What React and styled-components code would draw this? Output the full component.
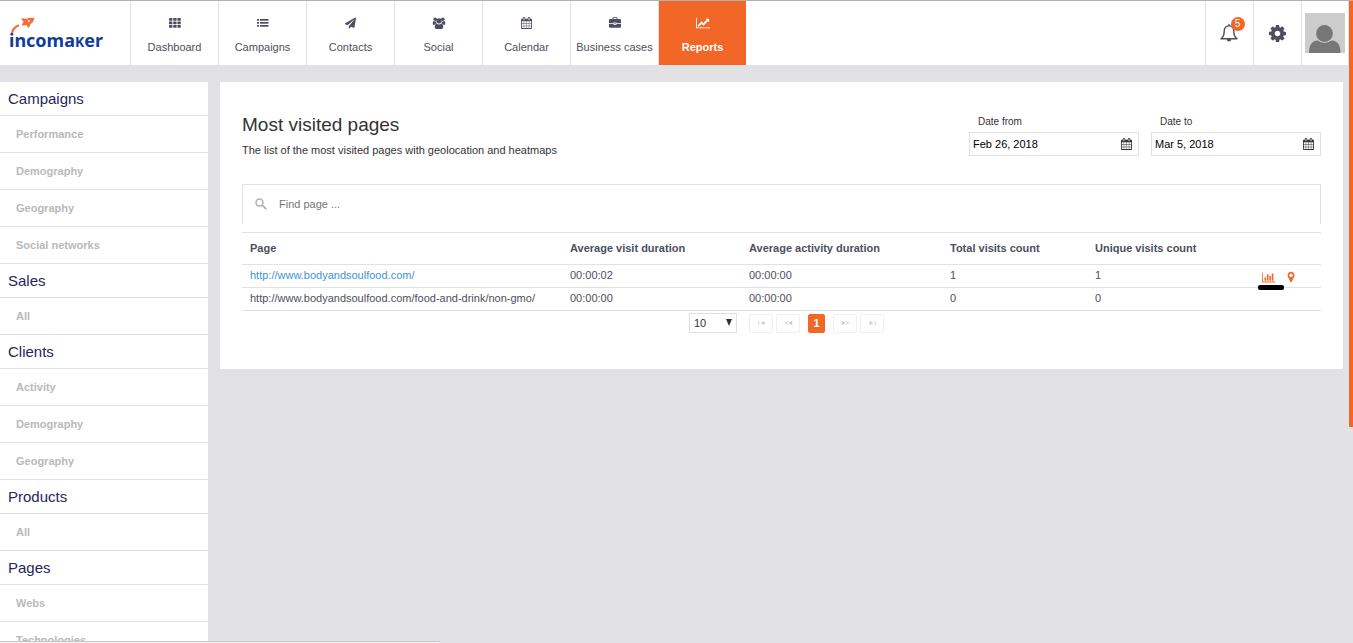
import { useState } from "react";
import styled, { createGlobalStyle } from "styled-components";
import { FaPaperPlane } from "react-icons/fa";

const Colors = {
  Orange: "#f26727",
  White: "#ffffff",
  Background: "#e2e2e4",
  Border: "#e1e1e3",
  Text: "#4d4f60",
  Dark: "#333333",
  Navy: "#26265c",
  Muted: "#b9b9b9",
  Link: "#3b93d8",
  Logo: "#123c9c",
};

const GlobalStyle = createGlobalStyle`
  * {
    box-sizing: border-box;
  }
  body {
    margin: 0;
    background: ${Colors.Background};
    color: ${Colors.Text};
    font-family: "Liberation Sans", Arial, sans-serif;
    font-size: 11px;
    line-height: 14px;
  }
  button, input, select {
    font: inherit;
    color: inherit;
  }
`;

const Shell = styled.div`
  display: grid;
  grid-template-columns: minmax(0, 1fr) 4px;
  height: 100vh;
  overflow: hidden;
  border-top: 1px solid #b0b0b2;
`;

const ScrollThumb = styled.div`
  height: 426px;
  background: ${Colors.Orange};
`;

const Header = styled.header`
  display: flex;
  height: 64px;
  background: ${Colors.White};
`;

const LogoLink = styled.a`
  width: 130px;
  padding: 14px 0 0 8px;
`;

const Nav = styled.nav`
  display: flex;
  flex: 1;
`;

const NavItem = styled.a`
  display: flex;
  flex-direction: column;
  align-items: center;
  gap: 10px;
  width: 88px;
  padding-top: 15px;
  border-left: 1px solid ${Colors.Border};
  background: ${(p) => (p.$active ? Colors.Orange : Colors.White)};
  color: ${(p) => (p.$active ? Colors.White : Colors.Text)};
  font-weight: ${(p) => (p.$active ? 700 : 400)};
  text-decoration: none;
  white-space: nowrap;

  svg {
    height: 14px;
  }
`;

const Tool = styled.button`
  display: flex;
  align-items: center;
  justify-content: center;
  width: 48px;
  padding: 0;
  border: 0;
  border-left: 1px solid ${Colors.Border};
  background: none;

  &:last-child {
    border-right: 1px solid ${Colors.Border};
  }
`;

const BellWrap = styled.span`
  position: relative;
  display: flex;
`;

const Badge = styled.span`
  position: absolute;
  top: -6px;
  right: -5px;
  width: 14px;
  height: 14px;
  border-radius: 50%;
  background: ${Colors.Orange};
  color: ${Colors.White};
  font-size: 10px;
  text-align: center;
`;

const Body = styled.div`
  display: flex;
  align-items: flex-start;
  gap: 12px;
  padding: 17px 6px 0 0;
`;

const Sidebar = styled.aside`
  width: 208px;
  flex-shrink: 0;
  background: ${Colors.White};
`;

const SideHeading = styled.h2`
  margin: 0;
  height: 34px;
  padding-left: 8px;
  border-bottom: 1px solid ${Colors.Border};
  color: ${Colors.Navy};
  font-size: 15px;
  font-weight: 400;
  line-height: 34px;
`;

const SideLink = styled.a`
  display: block;
  height: 37px;
  padding-left: 16px;
  border-bottom: 1px solid ${Colors.Border};
  color: ${Colors.Muted};
  font-weight: 700;
  line-height: 36px;
  text-decoration: none;
`;

const Panel = styled.main`
  flex: 1;
  min-width: 0;
  padding: 31px 22px 36px;
  background: ${Colors.White};
`;

const PanelHead = styled.div`
  display: flex;
  justify-content: space-between;
  margin-bottom: 27px;
`;

const Title = styled.h1`
  margin: 0 0 6px;
  color: ${Colors.Dark};
  font-size: 19px;
  font-weight: 400;
  line-height: 24px;
`;

const Subtitle = styled.p`
  margin: 0;
  color: ${Colors.Dark};
`;

const Dates = styled.div`
  display: flex;
  gap: 12px;
`;

const DateField = styled.label`
  display: flex;
  flex-direction: column;
  width: 170px;
  padding-top: 2px;
  gap: 3px;
  color: ${Colors.Dark};
`;

const DateLabel = styled.span`
  padding-left: 9px;
  font-size: 10px;
`;

const DateBox = styled.span`
  display: flex;
  align-items: center;
  height: 24px;
  padding: 0 6px 0 3px;
  border: 1px solid ${Colors.Border};
`;

const DateInput = styled.input`
  flex: 1;
  min-width: 0;
  padding: 0;
  border: 0;
  outline: 0;
  background: none;
  color: #000;
`;

const Search = styled.label`
  display: flex;
  align-items: center;
  gap: 12px;
  height: 40px;
  margin-bottom: 8px;
  padding: 0 0 2px 12px;
  border: 1px solid ${Colors.Border};
  border-bottom: 0;
`;

const SearchInput = styled.input`
  flex: 1;
  padding: 0;
  border: 0;
  outline: 0;
  background: none;

  &::placeholder {
    color: #757575;
    opacity: 1;
  }
`;

const Table = styled.table`
  width: 100%;
  table-layout: fixed;
  border-collapse: collapse;
  border-top: 1px solid ${Colors.Border};

  th, td {
    padding: 0 8px 2px;
    border-bottom: 1px solid ${Colors.Border};
    text-align: left;
    white-space: nowrap;
  }
  th {
    height: 32px;
  }
  td {
    height: 23px;
  }
`;

const Col = styled.col`
  width: ${(p) => p.$width};
`;

const PageLink = styled.a`
  color: ${Colors.Link};
  text-decoration: none;
`;

const Actions = styled.div`
  display: flex;
  align-items: center;
  gap: 10px;
  padding: 4px 0 0 6px;
`;

const ActionButton = styled.button`
  position: relative;
  display: flex;
  padding: 0;
  border: 0;
  background: none;
  color: ${Colors.Orange};
`;

const Marker = styled.span`
  position: absolute;
  top: 14px;
  left: -4px;
  width: 26px;
  height: 5px;
  border-radius: 2px;
  background: #000;
`;

const Pager = styled.div`
  display: flex;
  align-items: center;
  justify-content: center;
  gap: 3px;
  margin-top: 2px;
  padding-left: 10px;
`;

const SizeSelect = styled.select`
  width: 48px;
  height: 20px;
  margin-right: 9px;
  padding: 0 4px;
  border: 1px solid ${Colors.Border};
  border-radius: 0;
  appearance: none;
  background: ${Colors.White};
  color: ${Colors.Dark};
`;

const SizeWrap = styled.span`
  position: relative;
  display: flex;

  svg {
    position: absolute;
    top: 6px;
    right: 14px;
    pointer-events: none;
  }
`;

const PageButton = styled.button`
  display: flex;
  align-items: center;
  justify-content: center;
  width: 24px;
  height: 19px;
  padding: 0;
  border: 1px solid #f0f0f1;
  border-radius: 2px;
  background: ${Colors.White};
  color: #c3cfd6;
`;

const CurrentPage = styled(PageButton)`
  width: 17px;
  margin: 0 5px;
  border-color: ${Colors.Orange};
  background: ${Colors.Orange};
  color: ${Colors.White};
  font-weight: 700;
`;

const StatusStrip = styled.div`
  position: fixed;
  bottom: 0;
  left: 0;
  width: 440px;
  height: 2px;
  border-top: 1px solid #c6c6c8;
  border-top-right-radius: 2px;
  background: #f2f2f2;
`;

const Glyph = ({ box, size, children }) => (
  <svg width={size} height={size} viewBox={box} fill="currentColor" aria-hidden="true">
    {children}
  </svg>
);

const GridIcon = () => (
  <Glyph box="0 0 14 14" size={14}>
    {[2, 5.5, 9].map((y) =>
      [1, 5.2, 9.4].map((x) => <rect key={`${x}-${y}`} x={x} y={y} width="3.4" height="2.7" rx=".4" />)
    )}
  </Glyph>
);

const ListIcon = () => (
  <Glyph box="0 0 14 14" size={14}>
    {[3, 6, 9].map((y) => (
      <g key={y}>
        <rect x="1" y={y} width="2" height="1.7" />
        <rect x="4" y={y} width="8.500" height="1.7" />
      </g>
    ))}
  </Glyph>
);

const UsersIcon = () => (
  <Glyph box="0 0 14 14" size={14}>
    <circle cx="3.2" cy="3.2" r="1.8" />
    <circle cx="10.8" cy="3.2" r="1.8" />
    <circle cx="7" cy="4.8" r="2.6" />
    <path d="M.8 8.2V6.6Q.8 5 2 5q1 .8 2.2.4Q4 6.8 4.900 7.5 3.400 7.6 2.800 8.700H1.400Q.8 8.700.8 8.200z" />
    <path d="M13.200 8.200V6.600Q13.200 5 12 5q-1 .8-2.200.4Q10 6.800 9.100 7.500 10.600 7.600 11.200 8.700h1.400q.6 0 .6-.5z" />
    <path d="M2.700 11.300Q2.700 8 4.700 7.700 7 9.300 9.300 7.700q2 .3 2 3.600 0 1.700-1.800 1.700h-5q-1.800 0-1.800-1.700z" />
  </Glyph>
);

const CalendarIcon = () => (
  <svg width="11" height="12" viewBox="0 0 1664 1792" fill="currentColor" aria-hidden="true">
    <path d="M128 1664h288v-288h-288v288zM480 1664h320v-288h-320v288zM128 1312h288v-320h-288v320zM480 1312h320v-320h-320v320zM128 928h288v-288h-288v288zM864 1664h320v-288h-320v288zM480 928h320v-288h-320v288zM1248 1664h288v-288h-288v288zM864 1312h320v-320h-320v320zM512 448v-288q0-13-9.500-22.500t-22.500-9.500h-64q-13 0-22.500 9.500t-9.500 22.500v288q0 13 9.500 22.500t22.500 9.500h64q13 0 22.500-9.500t9.500-22.500zM1248 1312h288v-320h-288v320zM864 928h320v-288h-320v288zM1248 928h288v-288h-288v288zM1280 448v-288q0-13-9.500-22.500t-22.500-9.500h-64q-13 0-22.500 9.500t-9.500 22.500v288q0 13 9.500 22.500t22.500 9.500h64q13 0 22.500-9.500t9.500-22.500zM1664 384v1280q0 52-38 90t-90 38h-1408q-52 0-90-38t-38-90v-1280q0-52 38-90t90-38h128v-96q0-66 47-113t113-47h64q66 0 113 47t47 113v96h384v-96q0-66 47-113t113-47h64q66 0 113 47t47 113v96h128q52 0 90 38t38 90z" />
  </svg>
);

const BriefcaseIcon = () => (
  <Glyph box="0 0 14 14" size={14}>
    <path d="M4.500 3V2q0-.8.8-.8h3.400q.8 0 .8.800v1h2.400q1.100 0 1.100 1.100v3H8.500V6.600h-3v.5H1v-3Q1 3 2.100 3zM5.500 3h3v-.9h-3zM1 7.800h4.500v.5q0 .6.6.6h1.800q.6 0 .6-.6v-.5H13v2.900q0 1.100-1.100 1.100H2.100Q1 11.800 1 10.700zM6.300 7.300h1.400v1H6.300z" />
  </Glyph>
);

const LineChartIcon = () => (
  <Glyph box="0 0 2048 1792" size={14}>
    <path d="M2048 1536v128h-2048v-1536h128v1408h1920zM1920 288v435q0 21-19.500 29.500t-35.500-7.500l-121-121-633 633q-10 10-23 10t-23-10l-233-233-416 416-192-192 585-585q10-10 23-10t23 10l233 233 464-464-121-121q-16-16-7.500-35.500t29.500-19.500h435q14 0 23 9t9 23z" />
  </Glyph>
);

const BarChartIcon = () => (
  <Glyph box="0 0 2048 1792" size={13}>
    <path d="M640 896v512h-256v-512h256zm384-512v1024h-256v-1024h256zm1024 1152v128h-2048v-1536h128v1408h1920zm-640-896v768h-256v-768h256zm384-384v1152h-256v-1152h256z" />
  </Glyph>
);

const PinIcon = () => (
  <Glyph box="-256 0 1536 1792" size={12}>
    <path d="M768 640q0-106-75-181t-181-75-181 75-75 181 75 181 181 75 181-75 75-181zM1024 640q0 109-33 179l-364 774q-16 33-47.500 52t-67.500 19-67.500-19-46.500-52l-365-774q-33-70-33-179 0-212 150-362t362-150 362 150 150 362z" />
  </Glyph>
);

const BellIcon = () => (
  <svg width="20" height="20" viewBox="0 0 20 20" fill="none" aria-hidden="true">
    <path
      d="M9 2.600C5.600 3 4.200 5.300 4.200 8.200c0 4-1 5.900-3.200 7.600h16c-2.200-1.700-3.200-3.600-3.200-7.600 0-2.900-1.400-5.200-4.800-5.600z"
      stroke="currentColor"
      strokeWidth="1.400"
      strokeLinejoin="round"
    />
    <path d="M6.800 16h4.400q0 2.500-2.200 2.500T6.800 16zM8.200 1.200h1.600v1.600H8.200z" fill="currentColor" />
  </svg>
);

const CogIcon = () => (
  <Glyph box="0 128 1536 1536" size={17}>
    <path d="M1024 896q0-106-75-181t-181-75-181 75-75 181 75 181 181 75 181-75 75-181zM1536 787v222q0 12-8 23t-20 13l-185 28q-19 54-39 91 35 50 107 138 10 12 10 25t-9 23q-27 37-99 108t-94 71q-12 0-26-9l-138-108q-44 23-91 38-16 136-29 186-7 28-36 28h-222q-14 0-24.500-8.500t-11.500-21.500l-28-184q-49-16-90-37l-141 107q-10 9-25 9-14 0-25-11-126-114-165-168-7-10-7-23 0-12 8-23 15-21 51-66.500t54-70.500q-27-50-41-99l-183-27q-13-2-21-12.500t-8-23.500v-222q0-12 8-23t19-13l186-28q14-46 39-92-40-57-107-138-10-12-10-24 0-10 9-23 26-36 98.500-107.500t94.500-71.500q13 0 26 10l138 107q44-23 91-38 16-136 29-186 7-28 36-28h222q14 0 24.500 8.500t11.500 21.500l28 184q49 16 90 37l142-107q9-9 24-9 13 0 25 10 129 119 165 170 7 8 7 22 0 12-8 23-15 21-51 66.500t-54 70.500q26 50 41 98l183 28q13 2 21 12.500t8 23.500z" />
  </Glyph>
);

const AvatarIcon = () => (
  <svg width="40" height="40" viewBox="0 0 40 40" aria-hidden="true">
    <rect width="40" height="40" fill="#cccccc" />
    <path d="M4 40q0-12 8.500-12.500h14.500q8.500.5 8.500 12.500z" fill="#777777" />
    <circle cx="19.500" cy="20.500" r="9" fill="#777777" stroke="#cccccc" strokeWidth="1.200" />
  </svg>
);

const SearchIcon = () => (
  <svg width="12" height="12" viewBox="0 0 12 12" fill="none" stroke="#b0b0b0" aria-hidden="true">
    <circle cx="4.500" cy="4.500" r="3.500" strokeWidth="1.500" />
    <path d="M7.200 7.200l4 4" strokeWidth="1.800" />
  </svg>
);

const Logo = () => (
  <svg width="112" height="38" viewBox="0 0 112 38" role="img" aria-label="incomaker">
    <path d="M3.800 18.500Q4.800 12.500 11 10.200" stroke="#ff6b35" strokeWidth="2.200" fill="none" />
    <path
      d="M13 3.800q2.500-1.200 5 .2Q22 2.300 26.500 3q-.8 4.200-4.300 6.500.3 2.200-2.200 3.200l-1.300-2.700-3.400.8-1.500-1.300 1.700-2.700z"
      fill="#ff6b35"
    />
    <circle cx="20.800" cy="6" r="1.100" fill={Colors.White} />
    <text x="1" y="32" fill={Colors.Logo} fontFamily="'Noto Sans', sans-serif" fontSize="18" fontWeight="700">
      incoma<tspan fontSize="14">K</tspan>er
    </text>
  </svg>
);

const NavItems = [
  { Title: "Dashboard", Icon: GridIcon },
  { Title: "Campaigns", Icon: ListIcon },
  { Title: "Contacts", Icon: () => <FaPaperPlane size={11} /> },
  { Title: "Social", Icon: UsersIcon },
  { Title: "Calendar", Icon: CalendarIcon },
  { Title: "Business cases", Icon: BriefcaseIcon },
  { Title: "Reports", Icon: LineChartIcon, Active: true },
];

const Sections = [
  { Title: "Campaigns", Links: ["Performance", "Demography", "Geography", "Social networks"] },
  { Title: "Sales", Links: ["All"] },
  { Title: "Clients", Links: ["Activity", "Demography", "Geography"] },
  { Title: "Products", Links: ["All"] },
  { Title: "Pages", Links: ["Webs", "Technologies"] },
];

const Rows = [
  {
    Url: "http://www.bodyandsoulfood.com/",
    Visit: "00:00:02",
    Activity: "00:00:00",
    Total: 1,
    Unique: 1,
    Selected: true,
  },
  {
    Url: "http://www.bodyandsoulfood.com/food-and-drink/non-gmo/",
    Visit: "00:00:00",
    Activity: "00:00:00",
    Total: 0,
    Unique: 0,
  },
];

const PagerIcons = {
  First: "M1 1h1v6H1zM9 1v6L4 4z",
  Previous: "M5 1v1L2 4l3 2v1L0 4zM10 1v6L5 4z",
  Next: "M0 1v6l5-3zM5 1v1l3 2-3 2v1l5-3z",
  Last: "M1 1v6l5-3zM8 1h1v6H8z",
};

const PagerButton = ({ name }) => (
  <PageButton type="button" aria-label={`${name} page`}>
    <svg width="9" height="6" viewBox="0 0 10 8" fill="currentColor">
      <path d={PagerIcons[name]} />
    </svg>
  </PageButton>
);

function DatePicker({ label, initial }) {
  const [value, setValue] = useState(initial);
  return (
    <DateField>
      <DateLabel>{label}</DateLabel>
      <DateBox>
        <DateInput value={value} onChange={(e) => setValue(e.target.value)} />
        <CalendarIcon />
      </DateBox>
    </DateField>
  );
}

export default function App() {
  return (
    <>
      <GlobalStyle />
      <Shell>
        <div>
          <Header>
            <LogoLink href="#">
              <Logo />
            </LogoLink>
            <Nav>
              {NavItems.map(({ Title: name, Icon, Active }) => (
                <NavItem key={name} href="#" $active={Active}>
                  <Icon />
                  {name}
                </NavItem>
              ))}
            </Nav>
            <Tool type="button" aria-label="Notifications">
              <BellWrap>
                <BellIcon />
                <Badge>5</Badge>
              </BellWrap>
            </Tool>
            <Tool type="button" aria-label="Settings">
              <CogIcon />
            </Tool>
            <Tool type="button" aria-label="Account">
              <AvatarIcon />
            </Tool>
          </Header>
          <Body>
            <Sidebar>
              {Sections.map((section) => (
                <nav key={section.Title} aria-label={section.Title}>
                  <SideHeading>{section.Title}</SideHeading>
                  {section.Links.map((link) => (
                    <SideLink key={link} href="#">{link}</SideLink>
                  ))}
                </nav>
              ))}
            </Sidebar>
            <Panel>
              <PanelHead>
                <div>
                  <Title>Most visited pages</Title>
                  <Subtitle>The list of the most visited pages with geolocation and heatmaps</Subtitle>
                </div>
                <Dates>
                  <DatePicker label="Date from" initial="Feb 26, 2018" />
                  <DatePicker label="Date to" initial="Mar 5, 2018" />
                </Dates>
              </PanelHead>
              <Search>
                <SearchIcon />
                <SearchInput type="text" placeholder="Find page ..." aria-label="Find page" />
              </Search>
              <Table>
                <colgroup>
                  <Col $width="320px" />
                  <Col $width="179px" />
                  <Col $width="201px" />
                  <Col $width="145px" />
                  <Col />
                  <Col $width="73px" />
                </colgroup>
                <thead>
                  <tr>
                    <th>Page</th>
                    <th>Average visit duration</th>
                    <th>Average activity duration</th>
                    <th>Total visits count</th>
                    <th>Unique visits count</th>
                    <th aria-label="Actions" />
                  </tr>
                </thead>
                <tbody>
                  {Rows.map((row) => (
                    <tr key={row.Url}>
                      <td>{row.Selected ? <PageLink href="#">{row.Url}</PageLink> : row.Url}</td>
                      <td>{row.Visit}</td>
                      <td>{row.Activity}</td>
                      <td>{row.Total}</td>
                      <td>{row.Unique}</td>
                      <td>
                        {row.Selected && (
                          <Actions>
                            <ActionButton type="button" aria-label="Heatmap">
                              <BarChartIcon />
                              <Marker />
                            </ActionButton>
                            <ActionButton type="button" aria-label="Geolocation">
                              <PinIcon />
                            </ActionButton>
                          </Actions>
                        )}
                      </td>
                    </tr>
                  ))}
                </tbody>
              </Table>
              <Pager>
                <SizeWrap>
                  <SizeSelect aria-label="Rows per page">
                    <option>10</option>
                    <option>25</option>
                  </SizeSelect>
                  <svg width="6" height="7" viewBox="0 0 6 7">
                    <path d="M0 0h6L3 7z" fill={Colors.Dark} />
                  </svg>
                </SizeWrap>
                <PagerButton name="First" />
                <PagerButton name="Previous" />
                <CurrentPage type="button" aria-current="page">1</CurrentPage>
                <PagerButton name="Next" />
                <PagerButton name="Last" />
              </Pager>
            </Panel>
          </Body>
        </div>
        <ScrollThumb />
      </Shell>
      <StatusStrip />
    </>
  );
}
